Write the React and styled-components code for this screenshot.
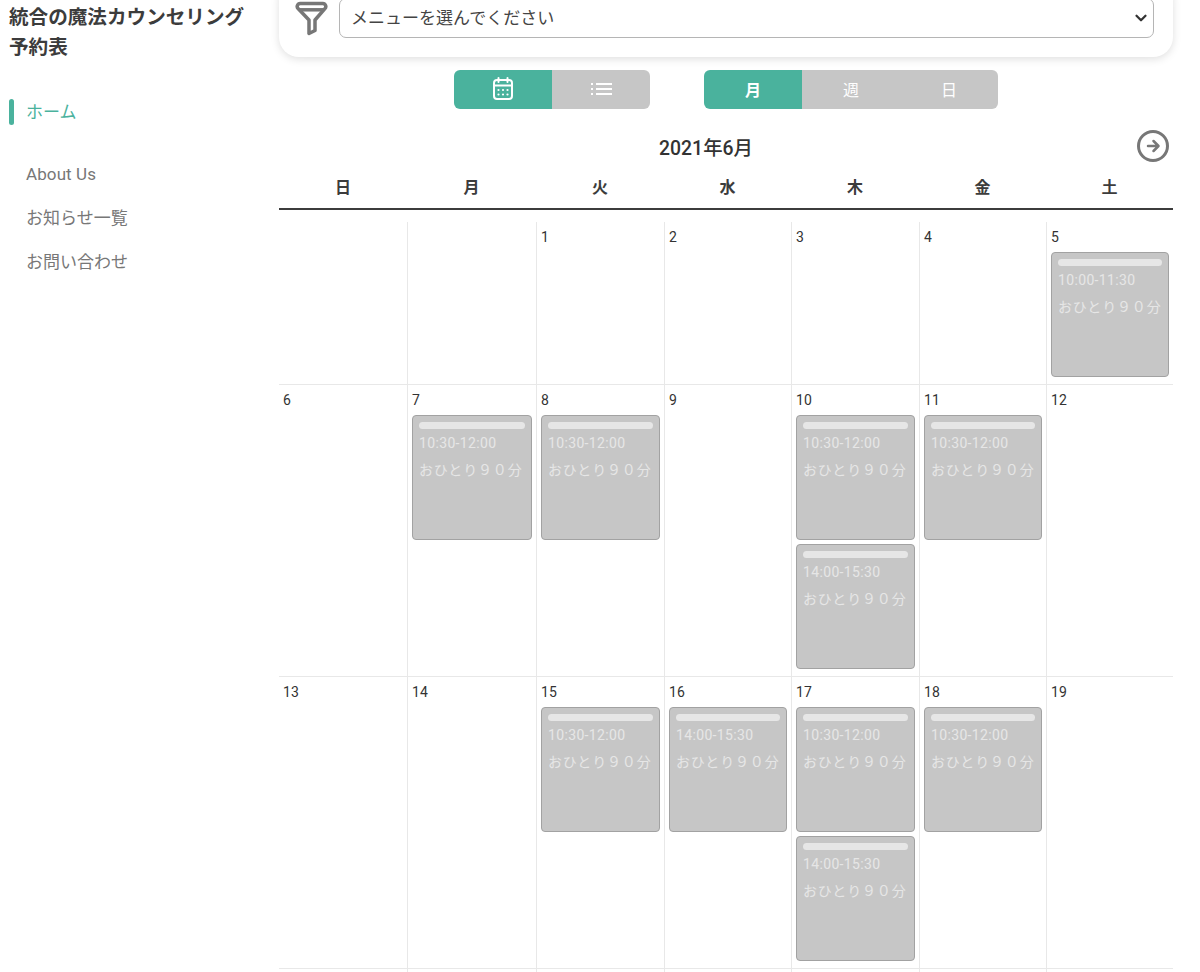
import React from 'react';
import styled, { createGlobalStyle } from 'styled-components';
import { ChevronDown } from 'lucide-react';

const GREEN = '#4ab29d';
const GRAY = '#c6c6c6';
const COLUMNS = '128px 129px 128px 127px 128px 127px 127px';

const GlobalStyle = createGlobalStyle`
  html, body {
    margin: 0;
    height: 972px;
    overflow: hidden;
    background: #fff;
    font-family: Roboto, "Noto Sans CJK JP", sans-serif;
    color: #333;
  }
  * { box-sizing: border-box; }
`;

const Page = styled.div`
  display: flex;
  width: 1200px;
  height: 972px;
  overflow: hidden;
`;
const Sidebar = styled.aside`
  flex: 0 0 279px;
  padding: 3px 0 0 9px;
`;
const SiteTitle = styled.h1`
  margin: 0 0 36px;
  font-size: 19.6px;
  line-height: 30px;
  font-weight: 700;
  color: #3c3c3c;
`;
const NavList = styled.nav`
  display: flex;
  flex-direction: column;
`;
const NavItem = styled.a`
  display: flex;
  align-items: center;
  height: 26px;
  margin-bottom: ${(p) => (p.$active ? '36px' : '18px')};
  padding-left: ${(p) => (p.$active ? '0' : '17px')};
  padding-bottom: ${(p) => (p.$latin ? '0' : '3px')};
  font-size: 17px;
  letter-spacing: ${(p) => (p.$latin ? '0.1px' : '0')};
  color: ${(p) => (p.$active ? GREEN : '#777')};
  &::before {
    content: '';
    display: ${(p) => (p.$active ? 'block' : 'none')};
    align-self: flex-start;
    width: 5px;
    height: 26px;
    margin-right: 12px;
    border-radius: 3px;
    background: ${GREEN};
  }
`;
const Main = styled.main`
  flex: 0 0 894px;
`;
const FilterCard = styled.div`
  display: flex;
  align-items: center;
  gap: 10px;
  margin-top: -20px;
  padding: 18px 19px 19px 16px;
  background: #fff;
  border-radius: 20px;
  box-shadow: 0 2px 8px rgba(0, 0, 0, 0.13);
`;
const SelectWrap = styled.div`
  position: relative;
  flex: 1;
  color: #333;
  & svg {
    position: absolute;
    right: 4px;
    top: 11px;
    pointer-events: none;
  }
`;
const Select = styled.select`
  display: block;
  width: 100%;
  height: 40px;
  padding: 0 11px;
  appearance: none;
  background: #fff;
  border: 1px solid #b5b5b5;
  border-radius: 7px;
  font-family: inherit;
  font-size: 17px;
  color: #444;
`;
const Toggles = styled.div`
  display: flex;
  justify-content: center;
  gap: 54px;
  margin-top: 13px;
`;
const ToggleGroup = styled.div`
  display: flex;
  border-radius: 6px;
  overflow: hidden;
`;
const ToggleButton = styled.div`
  display: flex;
  align-items: center;
  justify-content: center;
  width: 98px;
  height: 39px;
  padding-bottom: 2px;
  background: ${(p) => (p.$active ? GREEN : GRAY)};
  color: #fff;
  font-size: 16px;
  font-weight: ${(p) => (p.$active ? 700 : 400)};
`;
const MonthRow = styled.div`
  display: flex;
  align-items: center;
  gap: 4px;
  margin-top: 21px;
  padding-right: 4px;
`;
const MonthTitle = styled.div`
  flex: 1;
  text-align: center;
  font-size: 19.4px;
  font-weight: 500;
  color: #333;
`;
const WeekHeader = styled.div`
  display: grid;
  grid-template-columns: ${COLUMNS};
  height: 42px;
  margin: 6px 0 12px;
  border-bottom: 2px solid #3c3c3c;
`;
const WeekDay = styled.div`
  display: flex;
  align-items: center;
  justify-content: center;
  padding-bottom: 4px;
  font-size: 16px;
  font-weight: 700;
  color: #3c3c3c;
`;
const WeekRow = styled.div`
  display: grid;
  grid-template-columns: ${COLUMNS};
  border-bottom: 1px solid #e8e8e8;
`;
const DayCell = styled.div`
  display: flex;
  flex-direction: column;
  gap: 4px;
  min-width: 0;
  padding: 0 4px 7px;
  border-left: ${(p) => (p.$first ? 'none' : '1px solid #e8e8e8')};
`;
const DayNumber = styled.div`
  height: 26px;
  line-height: 30px;
  font-size: 14px;
  letter-spacing: 0.2px;
  color: #333;
`;
const EventCard = styled.div`
  height: 125px;
  padding: 6px;
  background: ${GRAY};
  border: 1px solid #a2a2a2;
  border-radius: 4px;
  color: #e6e6e6;
  font-size: 14px;
  line-height: 20px;
`;
const EventBar = styled.div`
  height: 7px;
  margin-bottom: 4px;
  border-radius: 4px;
  background: #e6e6e6;
`;
const EventTime = styled.div`
  margin-bottom: 7px;
  white-space: nowrap;
  letter-spacing: 0.35px;
`;
const EventName = styled.div`
  white-space: nowrap;
  letter-spacing: 0.85px;
`;

const FunnelIcon = () => (
  <svg width="34" height="36" viewBox="0 0 34 36" fill="none" stroke="#777" strokeWidth="3.500" strokeLinejoin="round" style={{ flex: '0 0 34px' }}>
    <path d="M5.500 3.500h22a3 3 0 0 1 2.200 5.300L20 20v10.500l-6 3V20L3.300 8.800a3 3 0 0 1 2.200-5.300z" />
    <path d="M4.500 9.800h24" />
  </svg>
);

const CalendarIcon = () => (
  <svg width="20" height="23" viewBox="0 0 20 23" fill="none" stroke="#fff" strokeWidth="2" strokeLinecap="round">
    <rect x="1" y="3" width="18" height="19" rx="3" />
    <path d="M1 8.500h18M5.500 1v4M14.500 1v4" />
    <g fill="#fff" stroke="none">
      <circle cx="5.500" cy="13" r="1.100" />
      <circle cx="10" cy="13" r="1.100" />
      <circle cx="14.500" cy="13" r="1.100" />
      <circle cx="5.500" cy="17.500" r="1.100" />
      <circle cx="10" cy="17.500" r="1.100" />
      <circle cx="14.500" cy="17.500" r="1.100" />
    </g>
  </svg>
);

const ListIcon = () => (
  <svg width="21" height="12" viewBox="0 0 21 12" fill="none" stroke="#fff" strokeWidth="2">
    <path d="M0 1h2M5 1h16M0 6h2M5 6h16M0 11h2M5 11h16" />
  </svg>
);

const NextIcon = () => (
  <svg width="32" height="32" viewBox="0 0 32 32" fill="none" stroke="#777" strokeLinecap="round" strokeLinejoin="round">
    <circle cx="16" cy="16" r="14.500" strokeWidth="3" />
    <path d="M11 16h10M16.500 11l5 5-5 5" strokeWidth="2.500" />
  </svg>
);

const SHORT = { time: '10:30-12:00' };
const AFTERNOON = { time: '14:00-15:30' };

const weeks = [
  [[''], [''], ['1'], ['2'], ['3'], ['4'], ['5', { time: '10:00-11:30' }]],
  [['6'], ['7', SHORT], ['8', SHORT], ['9'], ['10', SHORT, AFTERNOON], ['11', SHORT], ['12']],
  [['13'], ['14'], ['15', SHORT], ['16', AFTERNOON], ['17', SHORT, AFTERNOON], ['18', SHORT], ['19']],
  [[''], [''], [''], [''], [''], [''], ['']],
];

export default function App() {
  return (
    <Page>
      <GlobalStyle />
      <Sidebar>
        <SiteTitle>統合の魔法カウンセリング<br />予約表</SiteTitle>
        <NavList>
          <NavItem $active>ホーム</NavItem>
          <NavItem $latin>About Us</NavItem>
          <NavItem>お知らせ一覧</NavItem>
          <NavItem>お問い合わせ</NavItem>
        </NavList>
      </Sidebar>
      <Main>
        <FilterCard>
          <FunnelIcon />
          <SelectWrap>
            <Select defaultValue="">
              <option value="">メニューを選んでください</option>
            </Select>
            <ChevronDown size={18} strokeWidth={3} />
          </SelectWrap>
        </FilterCard>
        <Toggles>
          <ToggleGroup>
            <ToggleButton $active><CalendarIcon /></ToggleButton>
            <ToggleButton><ListIcon /></ToggleButton>
          </ToggleGroup>
          <ToggleGroup>
            <ToggleButton $active>月</ToggleButton>
            <ToggleButton>週</ToggleButton>
            <ToggleButton>日</ToggleButton>
          </ToggleGroup>
        </Toggles>
        <MonthRow>
          <MonthTitle>2021年6月</MonthTitle>
          <NextIcon />
        </MonthRow>
        <WeekHeader>
          {['日', '月', '火', '水', '木', '金', '土'].map((d) => <WeekDay key={d}>{d}</WeekDay>)}
        </WeekHeader>
        {weeks.map((week, w) => (
          <WeekRow key={w}>
            {week.map(([day, ...events], i) => (
              <DayCell key={i} $first={i === 0}>
                <DayNumber>{day}</DayNumber>
                {events.map((ev, j) => (
                  <EventCard key={j}>
                    <EventBar />
                    <EventTime>{ev.time}</EventTime>
                    <EventName>おひとり９０分</EventName>
                  </EventCard>
                ))}
              </DayCell>
            ))}
          </WeekRow>
        ))}
      </Main>
    </Page>
  );
}
